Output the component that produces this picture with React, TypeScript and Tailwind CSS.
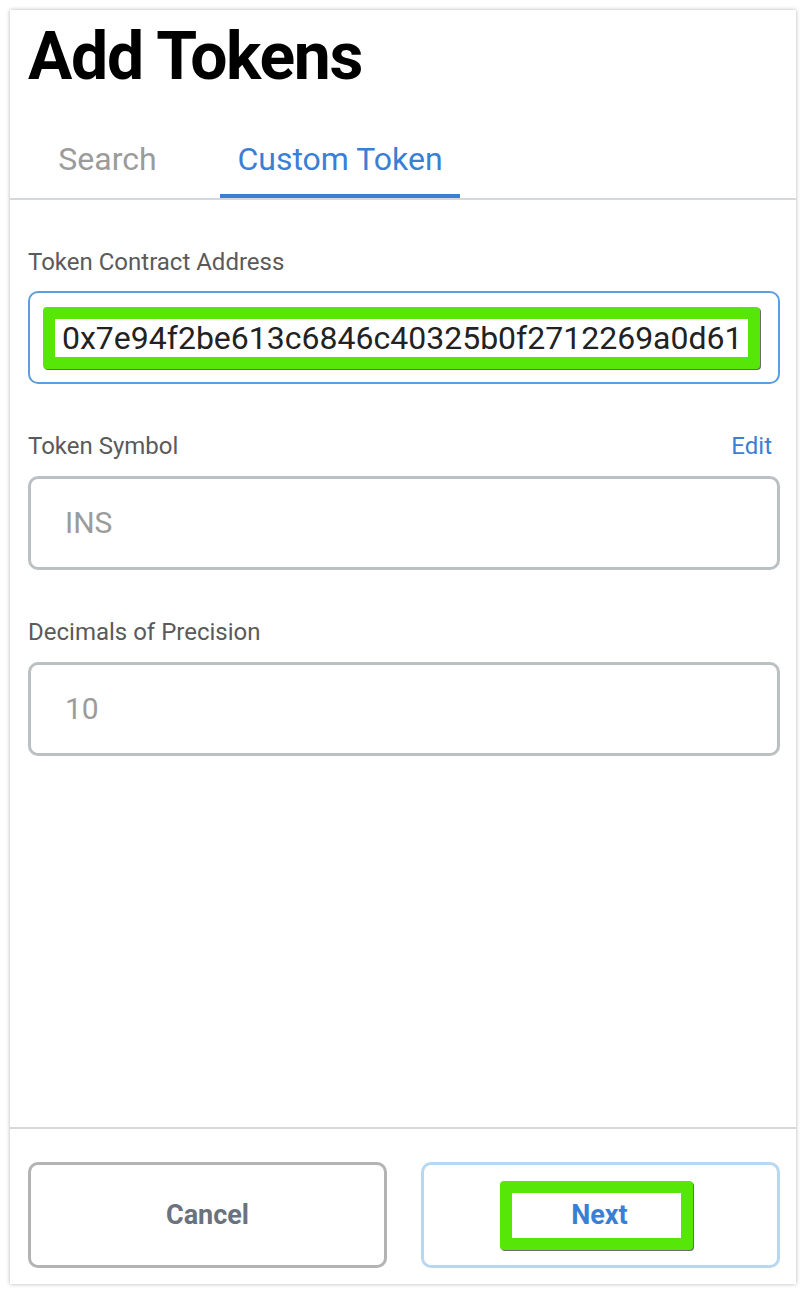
import React from 'react';

const FONT = { fontFamily: 'Roboto, "Liberation Sans", sans-serif' };

/* ------------------------------------------------------------------ */
/*  Pieces                                                             */
/* ------------------------------------------------------------------ */

function FieldLabel({ children, action }: { children: React.ReactNode; action?: string }) {
  return (
    <div className="flex h-[28px] items-center justify-between pr-[8px]">
      <span className="text-[24px] leading-[28px] text-[#5a5a5a]">{children}</span>
      {action && <span className="text-[24px] leading-[28px] text-[#3a7fd4]">{action}</span>}
    </div>
  );
}

function ReadOnlyInput({ value }: { value: string }) {
  return (
    <div className="flex h-[94px] items-center rounded-[10px] border-[3px] border-[#bbc0c5] pl-[34px]">
      <span className="text-[30px] leading-[36px] text-[#9b9b9b]">{value}</span>
    </div>
  );
}

/* ------------------------------------------------------------------ */
/*  App                                                                */
/* ------------------------------------------------------------------ */

export default function App() {
  return (
    <div className="min-h-[1294px] bg-white p-[10px]" style={FONT}>
      <div className="flex h-[1274px] w-[786px] flex-col bg-white shadow-[0_0_4px_rgba(0,0,0,0.3)]">
        {/* Header */}
        <h1 className="pl-[18px] pt-[14px] text-[66px] font-bold leading-[66px] tracking-[-1.3px] text-black">
          Add Tokens
        </h1>

        {/* Tabs */}
        <div className="flex border-b-2 border-[#d6d9dc] pl-[20px]">
          <div className="w-[155px] border-b-4 border-transparent pb-[16px] pt-[50px] text-center text-[32px] leading-[38px] text-[#9b9b9b]">
            Search
          </div>
          <div className="ml-[35px] w-[240px] border-b-4 border-[#3a7fd4] pb-[16px] pt-[50px] text-center text-[32px] leading-[38px] text-[#3a7fd4]">
            Custom Token
          </div>
        </div>

        {/* Form */}
        <div className="flex flex-1 flex-col gap-[48px] pl-[18px] pr-[16px] pt-[48px]">
          <div className="flex flex-col gap-[15px]">
            <FieldLabel>Token Contract Address</FieldLabel>
            <div className="flex h-[93px] items-center rounded-[10px] border-2 border-[#5b9ddf] pl-[13px] pr-[18px]">
              <div className="flex h-[62px] flex-1 items-center rounded-[4px] bg-[#56e607] p-[12px] shadow-[1px_1px_0_#6b6b6b]">
                <div className="flex h-full flex-1 items-center bg-white pl-[7px]">
                  <span className="text-[32px] leading-[36px] text-[#222222]">
                    0x7e94f2be613c6846c40325b0f2712269a0d61
                  </span>
                </div>
              </div>
            </div>
          </div>

          <div className="flex flex-col gap-[16px]">
            <FieldLabel action="Edit">Token Symbol</FieldLabel>
            <ReadOnlyInput value="INS" />
          </div>

          <div className="flex flex-col gap-[16px]">
            <FieldLabel>Decimals of Precision</FieldLabel>
            <ReadOnlyInput value="10" />
          </div>
        </div>

        {/* Footer */}
        <div className="flex gap-[34px] border-t-2 border-[#d6d9dc] pb-[16px] pl-[18px] pr-[16px] pt-[33px]">
          <button className="flex h-[106px] w-[359px] items-center justify-center rounded-[10px] border-[3px] border-[#b3b3b3] bg-white text-[27px] font-bold text-[#6a737d]">
            Cancel
          </button>
          <button className="flex h-[106px] flex-1 items-center justify-center rounded-[10px] border-[3px] border-[#b8d7f0] bg-white pr-[8px]">
            <span className="flex h-[69px] w-[193px] items-center rounded-[4px] bg-[#56e607] p-[12px] shadow-[1px_1px_0_#6b6b6b]">
              <span className="flex h-full flex-1 items-center justify-center bg-white pl-[6px] text-[27px] font-bold text-[#3a7fd4]">
                Next
              </span>
            </span>
          </button>
        </div>
      </div>
    </div>
  );
}
